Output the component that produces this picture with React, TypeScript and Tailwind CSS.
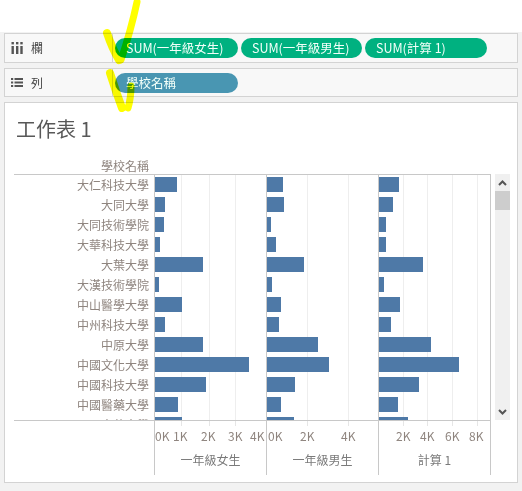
import React from 'react';

type Row = { name: string; values: [number, number, number] };

const rows: Row[] = [
  { name: '大仁科技大學', values: [22, 16, 20] },
  { name: '大同大學', values: [10, 17, 14] },
  { name: '大同技術學院', values: [9, 4, 7] },
  { name: '大華科技大學', values: [5, 9, 7] },
  { name: '大葉大學', values: [48, 37, 44] },
  { name: '大漢技術學院', values: [4, 5, 5] },
  { name: '中山醫學大學', values: [27, 14, 21] },
  { name: '中州科技大學', values: [10, 12, 12] },
  { name: '中原大學', values: [48, 51, 52] },
  { name: '中國文化大學', values: [94, 62, 80] },
  { name: '中國科技大學', values: [51, 28, 40] },
  { name: '中國醫藥大學', values: [23, 14, 19] },
  { name: '中華大學', values: [27, 27, 29] },
];

type Pane = {
  title: string;
  grid: number[];
  ticks: { label: string; left: number }[];
  last?: boolean;
};

const panes: Pane[] = [
  {
    title: '一年級女生',
    grid: [26, 54, 80],
    ticks: [
      { label: '0K', left: 0 },
      { label: '1K', left: 18 },
      { label: '2K', left: 46 },
      { label: '3K', left: 73 },
      { label: '4K', left: 95 },
    ],
  },
  {
    title: '一年級男生',
    grid: [40, 81],
    ticks: [
      { label: '0K', left: 1 },
      { label: '2K', left: 33 },
      { label: '4K', left: 74 },
    ],
  },
  {
    title: '計算 1',
    grid: [24, 48, 73, 98],
    ticks: [
      { label: '2K', left: 17 },
      { label: '4K', left: 41 },
      { label: '6K', left: 66 },
      { label: '8K', left: 90 },
    ],
    last: true,
  },
];

function ColumnsIcon() {
  return (
    <svg width="12" height="13" viewBox="0 0 12 13" fill="#555">
      <rect x="0.5" y="0" width="2.4" height="2.4" />
      <rect x="0.5" y="4" width="2.4" height="8" />
      <rect x="5" y="0" width="2.4" height="2.4" />
      <rect x="5" y="4" width="2.4" height="8" />
      <rect x="9.3" y="0" width="2.4" height="2.4" />
      <rect x="9.3" y="4" width="2.4" height="8" />
    </svg>
  );
}

function RowsIcon() {
  return (
    <svg width="12" height="9" viewBox="0 0 12 9" fill="#555">
      <rect x="0" y="0" width="2.2" height="2" />
      <rect x="3.5" y="0" width="8.5" height="2" />
      <rect x="0" y="3.5" width="2.2" height="2" />
      <rect x="3.5" y="3.5" width="8.5" height="2" />
      <rect x="0" y="7" width="2.2" height="2" />
      <rect x="3.5" y="7" width="8.5" height="2" />
    </svg>
  );
}

function Chevron({ down }: { down?: boolean }) {
  return (
    <svg width="9" height="6" viewBox="0 0 9 6" fill="none" stroke="#555" strokeWidth="2">
      {down ? <path d="M1 1 L4.5 4.5 L8 1" /> : <path d="M1 5 L4.5 1.5 L8 5" />}
    </svg>
  );
}

function Shelf({ icon, label, height, children }: { icon: React.ReactNode; label: string; height: string; children: React.ReactNode }) {
  return (
    <div className={`flex ${height} border border-[#d3d3d3] bg-[#f8f8f8]`}>
      <div className="flex w-[108px] items-center border-r border-[#d3d3d3] pl-[6px]">
        {icon}
        <span className="ml-[8px] text-[12px] leading-[16px] text-[#444]">{label}</span>
      </div>
      <div className="flex items-center gap-[3px] pl-[2px]">{children}</div>
    </div>
  );
}

function Pill({ text, width, color }: { text: string; width: string; color: string }) {
  return (
    <div className={`${width} ${color} h-[20px] rounded-full pl-[11px] text-[12.5px] leading-[20px] text-[#f2fff9] whitespace-nowrap`}>
      {text}
    </div>
  );
}

export default function App() {
  return (
    <div className="relative h-[491px] w-[522px] overflow-hidden bg-[#f2f2f2] font-['Noto_Sans_CJK_TC',sans-serif]">
      <div className="h-[32px] bg-white" />
      <div className="px-[4px] pt-[1px]">
        <Shelf icon={<ColumnsIcon />} label="欄" height="h-[30px]">
          <Pill text="SUM(一年級女生)" width="w-[123px]" color="bg-[#00b180]" />
          <Pill text="SUM(一年級男生)" width="w-[121px]" color="bg-[#00b180]" />
          <Pill text="SUM(計算 1)" width="w-[122px]" color="bg-[#00b180]" />
        </Shelf>
        <div className="mt-[5px]">
          <Shelf icon={<RowsIcon />} label="列" height="h-[29px]">
            <Pill text="學校名稱" width="w-[123px]" color="bg-[#4996b2]" />
          </Shelf>
        </div>

        {/* worksheet */}
        <div className="mt-[5px] h-[381px] border border-[#d3d3d3] bg-white">
          <div className="pl-[11px] pt-[12px] text-[20px] leading-[28px] text-[#585858]">工作表 1</div>

          <div className="ml-[9px] mt-[15px] flex">
            <div className="w-[477px]">
              <div className="h-[17px] border-b border-[#c8c8c8]">
                <div className="w-[140px] pr-[5px] text-right text-[12px] leading-[16px] text-[#8f857f]">學校名稱</div>
              </div>

              {/* body */}
              <div className="flex h-[245px] overflow-hidden">
                <div className="w-[140px] shrink-0">
                  {rows.map((r) => (
                    <div key={r.name} className="h-[20px] pr-[5px] text-right text-[12px] leading-[20px] text-[#8f857f]">
                      {r.name}
                    </div>
                  ))}
                </div>
                {panes.map((p, i) => (
                  <div
                    key={p.title}
                    className={`relative shrink-0 border-l border-[#c8c8c8] ${p.last ? 'w-[113px] border-r' : 'w-[112px]'}`}
                  >
                    {p.grid.map((g) => (
                      <div key={g} className="absolute top-0 h-full w-px bg-[#eeeeee]" style={{ left: g }} />
                    ))}
                    <div className="relative">
                      {rows.map((r) => (
                        <div key={r.name} className="h-[20px] pt-[2px]">
                          <div className="h-[15px] bg-[#4e79a7]" style={{ width: r.values[i] }} />
                        </div>
                      ))}
                    </div>
                  </div>
                ))}
              </div>

              {/* axes */}
              <div className="flex h-[55px] border-t border-[#c8c8c8]">
                <div className="w-[140px] shrink-0" />
                {panes.map((p) => (
                  <div
                    key={p.title}
                    className={`relative shrink-0 border-l border-[#c8c8c8] ${p.last ? 'w-[113px] border-r' : 'w-[112px]'}`}
                  >
                    {p.grid.map((g) => (
                      <div key={g} className="absolute top-0 h-[5px] w-px bg-[#e6e6e6]" style={{ left: g }} />
                    ))}
                    <div className="relative mt-[7px] h-[16px]">
                      {p.ticks.map((t) => (
                        <span
                          key={t.label}
                          className="absolute top-0 text-[12px] leading-[16px] text-[#8f857f]"
                          style={{ left: t.left }}
                        >
                          {t.label}
                        </span>
                      ))}
                    </div>
                    <div className="mt-[8px] text-center text-[12px] leading-[16px] text-[#7a7a7a]">{p.title}</div>
                  </div>
                ))}
              </div>
            </div>

            {/* scrollbar */}
            <div className="ml-[4px] mt-[16px] flex h-[246px] w-[15px] flex-col bg-[#f0f0f0]">
              <div className="flex h-[17px] items-center justify-center">
                <Chevron />
              </div>
              <div className="h-[19px] bg-[#cdcdcd]" />
              <div className="flex-1" />
              <div className="flex h-[17px] items-center justify-center">
                <Chevron down />
              </div>
            </div>
          </div>
        </div>
      </div>

      {/* highlighter marks */}
      <svg
        className="pointer-events-none absolute left-0 top-0 mix-blend-multiply"
        width="150"
        height="115"
        viewBox="0 0 150 115"
        fill="none"
        stroke="#ffff00"
        strokeLinecap="round"
        strokeLinejoin="round"
      >
        <path d="M107 33 Q112 48 119 60" strokeWidth="8" />
        <path d="M137 2 Q131 30 121 60" strokeWidth="7" />
        <path d="M138 0 L136 10" strokeWidth="4" />
        <path d="M110 73 Q116 92 122 108" strokeWidth="8" />
        <path d="M131 86 Q131 98 128 108" strokeWidth="7" />
      </svg>
    </div>
  );
}
